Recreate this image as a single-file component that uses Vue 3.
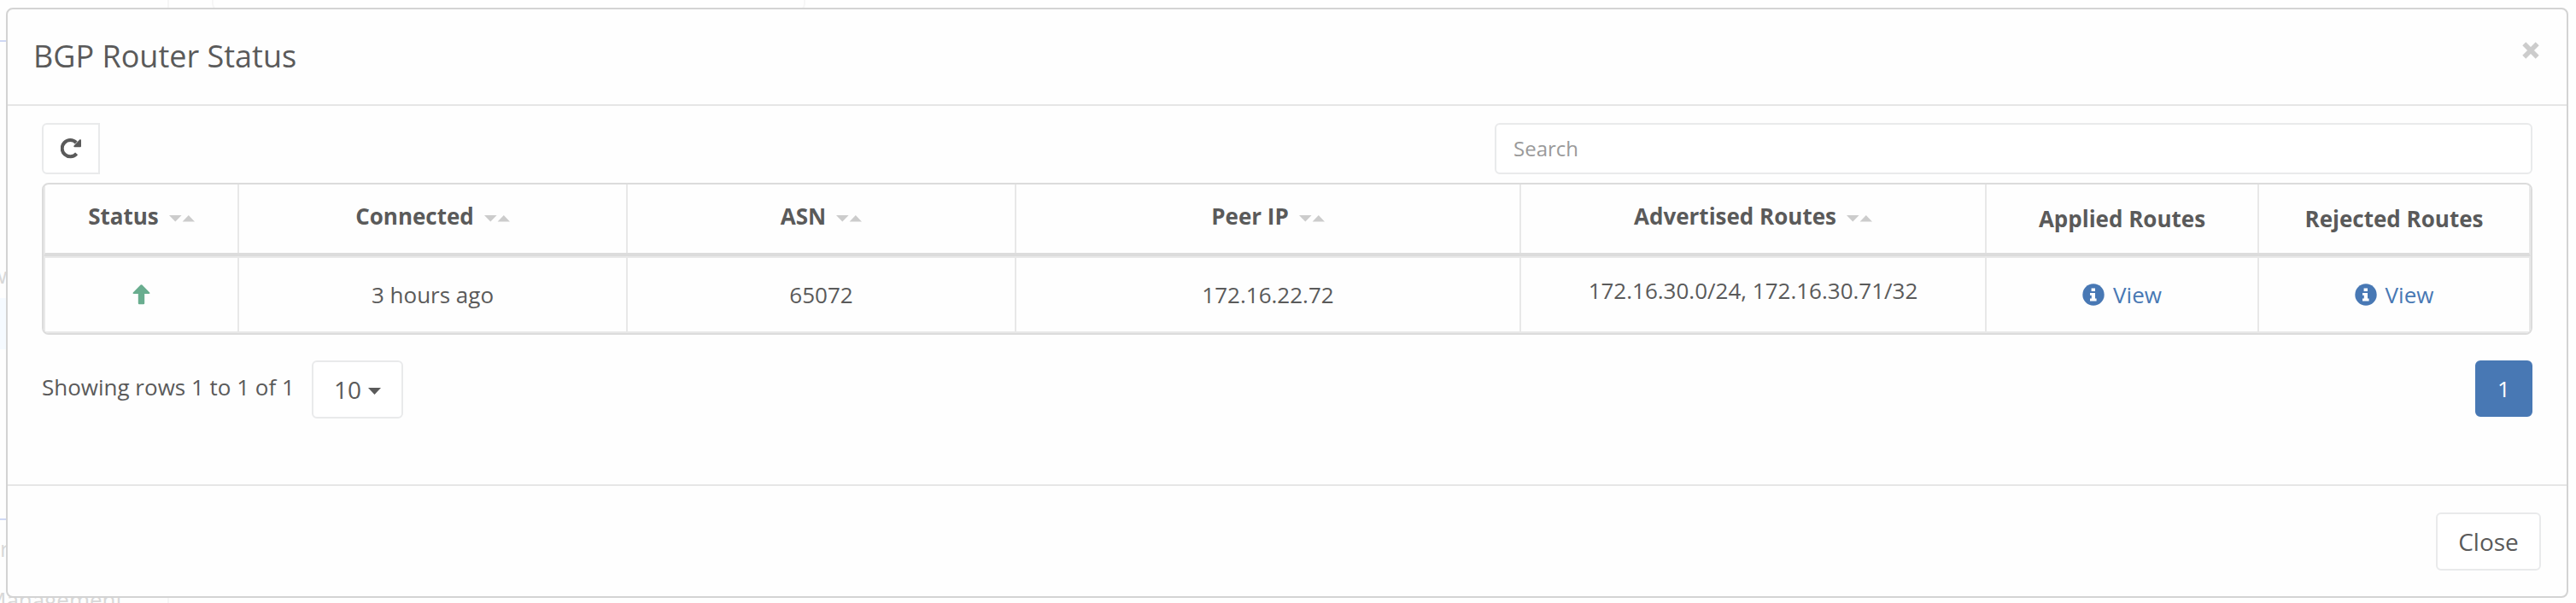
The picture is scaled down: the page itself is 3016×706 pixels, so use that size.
<script setup>
const columns = [
  { key: 'status', label: 'Status', sortable: true },
  { key: 'connected', label: 'Connected', sortable: true },
  { key: 'asn', label: 'ASN', sortable: true },
  { key: 'peer', label: 'Peer IP', sortable: true },
  { key: 'advertised', label: 'Advertised Routes', sortable: true },
  { key: 'applied', label: 'Applied Routes' },
  { key: 'rejected', label: 'Rejected Routes' },
]
const rows = [
  {
    connected: '3 hours ago',
    asn: '65072',
    peer: '172.16.22.72',
    advertised: '172.16.30.0/24, 172.16.30.71/32',
  },
]
</script>

<template>
  <div class="page">
    <div class="backdrop">
      <i class="rule r1"></i>
      <span class="bg-text t1">w</span>
      <i class="band"></i>
      <i class="rule r2"></i>
      <span class="bg-text t2">r</span>
      <span class="bg-text t3">Management</span>
      <i class="edge e1"></i>
      <i class="edge e2"></i>
      <i class="panel p1"></i>
    </div>

    <section class="modal">
      <header class="head">
        <h4>BGP Router Status</h4>
        <button class="dismiss" aria-label="Dismiss">
          <svg width="20" height="20" viewBox="0 0 20 20"><path d="M2.3 2.3L17.7 17.7M17.7 2.3L2.3 17.7" stroke="#ccc" stroke-width="5.6" /></svg>
        </button>
      </header>

      <div class="body">
        <div class="toolbar">
          <button class="refresh" aria-label="Refresh">
            <svg width="24" height="24" viewBox="0 0 24 24">
              <path d="M18.6 17.9A9.6 9.6 0 1 1 18.2 5" fill="none" stroke="#5a5a5a" stroke-width="4" />
              <path d="M22.4 1.3Q24 .7 24 2.3V9.2Q24 10.2 23 10.2H16.2Q14.6 10 15.6 8.4Z" fill="#5a5a5a" />
            </svg>
          </button>
          <input class="search" type="text" placeholder="Search" />
        </div>

        <div class="table">
          <div class="tr thead">
            <div v-for="c in columns" :key="c.key" class="th" :class="{ sortable: c.sortable }">
              <span>{{ c.label }}</span>
              <svg v-if="c.sortable" class="sort" width="30" height="8" viewBox="0 0 30 8">
                <path d="M0 0H14.6L7.3 7.6ZM15.6 7.6H30L22.8 0Z" fill="#ccc" />
              </svg>
            </div>
          </div>
          <div v-for="r in rows" :key="r.asn" class="tr trow">
            <div class="td">
              <svg class="up" width="21" height="24" viewBox="0 0 21 24">
                <path d="M9.6.5Q10.5-.2 11.4.5L20.2 9.4Q21 11 19.4 11H14.2V22Q14.2 23.2 13 23.2H8Q6.8 23.2 6.8 22V11H1.6Q0 11 .8 9.4Z" fill="#69ad8f" />
              </svg>
            </div>
            <div class="td">{{ r.connected }}</div>
            <div class="td">{{ r.asn }}</div>
            <div class="td">{{ r.peer }}</div>
            <div class="td raised">{{ r.advertised }}</div>
            <div v-for="n in 2" :key="n" class="td">
              <a class="view">
                <svg width="26" height="26" viewBox="0 0 26 26">
                  <circle cx="13" cy="13" r="12.7" fill="#4878b4" />
                  <path d="M10.6 5.6H15V9H10.6ZM9 11H15V17.4H16.6V20.4H9V17.4H10.8V13.8H9Z" fill="#fff" />
                </svg>
                <span>View</span>
              </a>
            </div>
          </div>
        </div>

        <div class="pager">
          <span class="info">Showing rows 1 to 1 of 1</span>
          <button class="size">
            <span>10</span>
            <svg width="15" height="8" viewBox="0 0 15 8"><path d="M0 0H15L7.5 8Z" fill="#5a5a5a" /></svg>
          </button>
          <button class="current">1</button>
        </div>
      </div>

      <footer class="foot">
        <button class="close">Close</button>
      </footer>
    </section>
  </div>
</template>

<style>
body {
  margin: 0;
  background: #fefefe;
}
</style>

<style scoped>
.page {
  position: relative;
  box-sizing: border-box;
  width: 3016px;
  height: 706px;
  padding: 9px 9px 6px 7px;
  overflow: hidden;
  background: #fefefe;
  color: #5a5a5a;
  font: 26px/36px "Open Sans", "Noto Sans", sans-serif;
}
.backdrop { position: absolute; inset: 0; }
.backdrop > * { position: absolute; }
.rule { left: 0; width: 8px; height: 2px; background: #cfd8f4; }
.r1 { top: 47px; }
.r2 { top: 607px; }
.band { left: 0; top: 349px; width: 8px; height: 60px; background: #f5faff; }
.bg-text { color: #d8d8d8; font-size: 26px; line-height: 36px; white-space: nowrap; }
.t1 { left: -12px; top: 304px; }
.t2 { left: 0; top: 624px; }
.t3 { left: -16px; top: 684px; }
.edge { left: 196px; width: 2px; background: #f6f6f6; }
.e1 { top: 0; height: 9px; }
.e2 { top: 698px; height: 8px; }
.panel { box-sizing: border-box; border: 2px solid #f6f6f6; border-radius: 10px; }
.p1 { left: 248px; top: -36px; width: 695px; height: 50px; }

button, input {
  box-sizing: border-box;
  margin: 0;
  padding: 0;
  background: #fff;
  border: 2px solid #e9eaeb;
  border-radius: 6px;
  color: inherit;
  font: inherit;
}
.modal {
  position: relative;
  box-sizing: border-box;
  display: flex;
  flex-direction: column;
  height: 691px;
  background: #fefefe;
  border: 2px solid #d3d3d3;
  border-radius: 8px;
}
.head {
  box-sizing: border-box;
  display: flex;
  justify-content: space-between;
  height: 113px;
  padding: 30px 32px 0 30px;
  border-bottom: 2px solid #e6e6e6;
}
h4 { margin: 0; font-size: 36px; line-height: 50px; font-weight: 400; }
.dismiss { display: block; height: 20px; margin-top: 8px; border: 0; background: none; line-height: 0; }
.body { flex: 1; padding: 20px 40px 0; }
.toolbar { display: flex; justify-content: space-between; height: 60px; }
.refresh {
  display: flex;
  align-items: center;
  justify-content: center;
  width: 68px;
  border-radius: 6px 0 0 6px;
}
.search { width: 1215px; padding: 0 20px; font-size: 24px; }
.search::placeholder { color: #9a9a9a; opacity: 1; }
.table {
  box-sizing: border-box;
  height: 178px;
  margin-top: 10px;
  overflow: hidden;
  border: 2px solid #dcdcdc;
  border-radius: 8px;
}
.tr {
  box-sizing: border-box;
  display: grid;
  grid-template-columns: 225px 455px 455px 591px 545px 319px 318px;
  border: solid #e8e8e8;
}
.thead { height: 84px; border-width: 0 2px 4px; border-bottom-color: #dcdcdc; }
.trow { height: 90px; border-width: 2px; }
.th, .td {
  box-sizing: border-box;
  display: flex;
  justify-content: center;
  align-items: center;
}
.th + .th, .td + .td { border-left: 2px solid #e8e8e8; }
.th { font-weight: 700; }
.sortable { gap: 12px; padding-bottom: 6px; }
.sort { margin-top: 5px; }
.raised { padding-bottom: 10px; }
.view { display: flex; align-items: center; gap: 10px; color: #4878b4; }
.pager { display: flex; align-items: flex-start; height: 68px; margin-top: 30px; }
.info { flex: 0 0 316px; margin-top: 13px; }
.size {
  display: flex;
  align-items: center;
  justify-content: center;
  gap: 8px;
  width: 107px;
  height: 68px;
  font-size: 28px;
}
.size svg { margin-top: 4px; }
.current {
  width: 67px;
  height: 66px;
  margin-left: auto;
  background: #4878b4;
  border-color: #4878b4;
  color: #fff;
}
.foot {
  box-sizing: border-box;
  display: flex;
  justify-content: flex-end;
  height: 131px;
  padding: 31px 30px 0;
  border-top: 2px solid #e6e6e6;
}
.close { width: 123px; height: 68px; font-size: 28px; }
</style>
